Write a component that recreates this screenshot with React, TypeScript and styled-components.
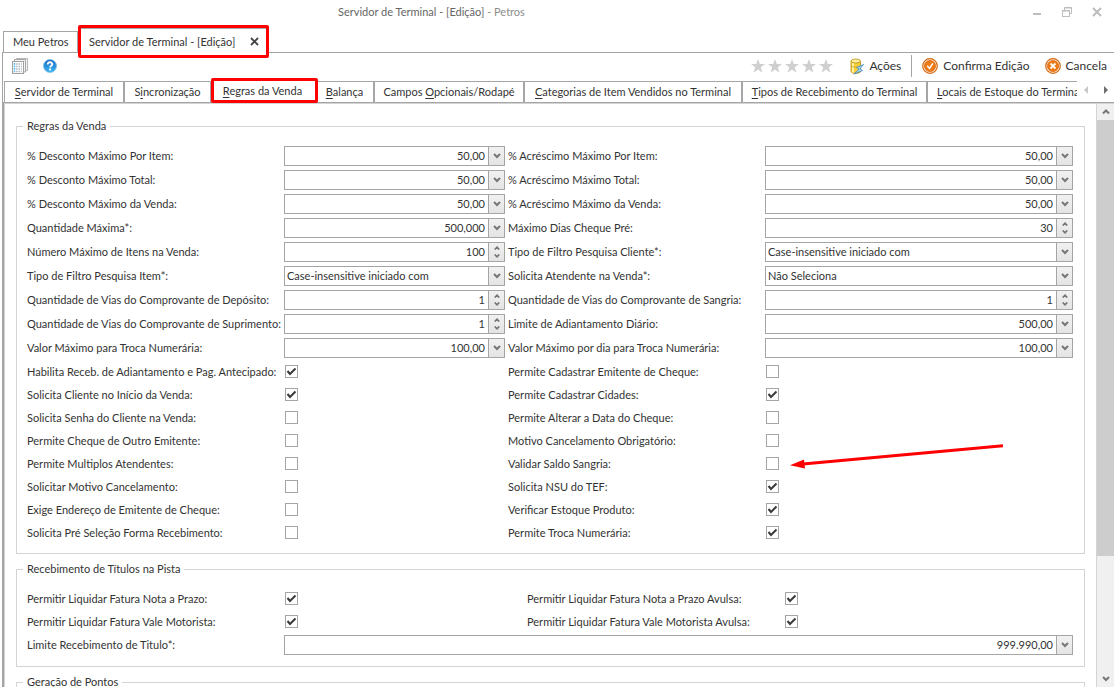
import React, { useId } from "react";
import styled, { createGlobalStyle, css } from "styled-components";

const line = "#a5a5a5";
const softLine = "#d4d4d4";
const ink = "#333333";
const red = "#fe0000";

const GlobalStyle = createGlobalStyle`
  *, *::before, *::after { box-sizing: border-box; }
  body {
    margin: 0;
    background: #ffffff;
    color: ${ink};
    font: 11px/14px Lato, Tahoma, sans-serif;
  }
  button, input, select { font: inherit; color: inherit; }
`;

const Window = styled.div`
  display: flex;
  flex-direction: column;
  height: 100vh;
  overflow: hidden;
`;

const TitleBar = styled.header`
  display: flex;
  align-items: center;
  height: 24px;
  padding: 0 11px 0 338px;
`;

const Title = styled.h1`
  flex: 1;
  margin: 0;
  font-size: 11px;
  font-weight: 400;
  color: #666666;
  span { color: #8c8c8c; }
`;

const WindowButtons = styled.div`
  display: flex;
  gap: 18px;
`;

const IconButton = styled.button`
  display: flex;
  align-items: center;
  justify-content: center;
  padding: 0;
  border: 0;
  background: none;
`;

const DocTabs = styled.nav`
  display: flex;
  align-items: flex-end;
  height: 28px;
  padding-left: 3px;
`;

const DocTab = styled.button<{ $active?: boolean }>`
  display: flex;
  align-items: center;
  height: 21px;
  padding: 0 9px;
  width: 75px;
  border: 1px solid ${line};
  border-bottom: 0;
  background: #ffffff;
  white-space: nowrap;
  ${(p) =>
    p.$active &&
    css`
      position: relative;
      z-index: 1;
      justify-content: space-between;
      width: 191px;
      height: 33px;
      margin-bottom: -6px;
      padding: 0 7px 0 8px;
      border: 3px solid ${red};
      border-radius: 2px;
      box-shadow: inset 0 1px ${line};
    `}
`;

const Frame = styled.main`
  display: flex;
  flex: 1;
  flex-direction: column;
  min-height: 0;
  margin-left: 2px;
  border: solid ${line};
  border-width: 1px 0 0 1px;
`;

const Toolbar = styled.div`
  display: flex;
  align-items: center;
  gap: 15px;
  height: 28px;
  padding: 0 7px 2px 9px;
`;

const Stars = styled.div`
  display: flex;
  gap: 3px;
  margin: 0 2px 0 auto;
`;

const Action = styled.button`
  display: flex;
  align-items: center;
  gap: 5px;
  padding: 0;
  border: 0;
  background: none;
  font-size: 12px;
  line-height: 16px;
`;

const Divider = styled.span`
  width: 1px;
  height: 22px;
  margin: 0 -5px;
  background: ${line};
`;

const TabRow = styled.div`
  display: flex;
  height: 22px;
  padding-left: 1px;
  border-bottom: 1px solid ${line};
`;

const TabList = styled.nav`
  display: flex;
  flex: 1;
  min-width: 0;
  height: 25px;
  margin-top: -3px;
  padding: 3px 0;
  overflow: hidden;
`;

const Tab = styled.button<{ $width: number; $active?: boolean }>`
  flex: none;
  width: ${(p) => p.$width}px;
  height: 22px;
  padding: 0;
  border: 1px solid ${line};
  background: #ffffff;
  white-space: nowrap;
  u { text-underline-offset: 2px; }
  &:last-child { padding-left: 9px; text-align: left; }
  ${(p) =>
    p.$active &&
    css`
      position: relative;
      z-index: 1;
      height: 25px;
      margin: -3px -3px 0 0;
      padding-right: 4px;
      border: 3px solid ${red};
      border-radius: 2px;
    `}
`;

const TabArrows = styled.div`
  display: flex;
  justify-content: space-between;
  width: 37px;
  padding: 0 6px 4px 7px;
`;

const Panel = styled.section`
  display: flex;
  flex: 1;
  min-height: 0;
  border: solid ${softLine};
  border-width: 1px 0 0 1px;
  box-shadow: -1px 0 ${line};
  margin-left: 1px;
`;

const Content = styled.form`
  display: flex;
  flex: 1;
  flex-direction: column;
  gap: 8px;
  min-width: 0;
  padding: 15px 11px 0;
  overflow: hidden;
`;

const Group = styled.fieldset`
  flex: none;
  min-width: 0;
  margin: 0;
  padding: 11px 11px 9px 10px;
  border: 1px solid ${softLine};
`;

const Legend = styled.legend`
  margin-left: -4px;
  padding: 0 4px;
  line-height: 14px;
`;

const FormGrid = styled.div<{ $even?: boolean }>`
  display: grid;
  grid-template-columns: ${(p) =>
    p.$even ? "257px 243fr 257px 289fr" : "257px 221fr 260px 308fr"};
  grid-auto-rows: min-content;
  align-items: center;
`;

const Label = styled.label<{ $inset?: boolean }>`
  padding-left: ${(p) => (p.$inset ? 3 : 0)}px;
  white-space: nowrap;
`;

const FieldCell = styled.div<{ $wide?: boolean }>`
  display: flex;
  align-items: center;
  height: 24px;
  ${(p) => p.$wide && "grid-column: 2 / -1;"}
`;

const Box = styled.div`
  display: flex;
  flex: 1;
  min-width: 0;
  height: 20px;
  border: 1px solid ${line};
`;

const NumberInput = styled.input`
  flex: 1;
  min-width: 0;
  padding: 0 3px;
  border: 0;
  outline: 0;
  background: none;
  text-align: right;
`;

const Select = styled.select`
  flex: 1;
  min-width: 0;
  padding: 0 2px;
  border: 0;
  outline: 0;
  background: none;
  appearance: none;
`;

const DropButton = styled.button`
  display: flex;
  flex-direction: column;
  align-items: center;
  justify-content: center;
  gap: 4px;
  width: 16px;
  padding: 0;
  border: 0;
  border-left: 1px solid ${line};
  background: linear-gradient(#f1f1f1, #e4e4e4);
`;

const CheckCell = styled.div`
  position: relative;
  display: flex;
  align-items: center;
  height: 23px;
  padding-left: 1px;
`;

const CheckInput = styled.input`
  width: 13px;
  height: 13px;
  margin: 0;
  border: 1px solid ${line};
  background: #ffffff;
  appearance: none;
  & + svg { visibility: hidden; }
  &:checked + svg { visibility: visible; }
`;

const Tick = styled.svg`
  margin-left: -13px;
  pointer-events: none;
`;

const Pointer = styled.svg`
  position: absolute;
  top: -8px;
  left: 24px;
  pointer-events: none;
`;

const ScrollBar = styled.div`
  display: flex;
  flex: none;
  flex-direction: column;
  width: 18px;
  border-left: 1px solid ${softLine};
  background: #f0f0f0;
`;

const ScrollButton = styled(IconButton)`
  height: 16px;
`;

const ScrollThumb = styled.div`
  flex: 436;
  background: #cdcdcd;
`;

const ScrollRest = styled.div`
  flex: 115;
`;

function Chevron({ up = false, small = false }: { up?: boolean; small?: boolean }) {
  const w = small ? 6 : 8;
  const d = small
    ? up ? "M.7 3.5 3 1.2 5.3 3.5" : "M.7.5 3 2.8 5.3.5"
    : up ? "M1 4.5 4 1.5 7 4.5" : "M1 1 4 4 7 1";
  return (
    <svg width={w} height={small ? 4 : 6} viewBox={`0 0 ${w} ${small ? 4 : 6}`} aria-hidden="true">
      <path d={d} fill="none" stroke="#767676" strokeWidth={small ? 1.7 : 2} />
    </svg>
  );
}

const StarIcon = () => (
  <svg width="14" height="14" viewBox="0 0 14 14" aria-hidden="true">
    <path d="M7 0 8.8 5H14L9.8 8.3 11.4 13.7 7 10.4 2.6 13.7 4.2 8.3 0 5H5.2Z" fill="#cfcfcf" />
  </svg>
);

const SheetsIcon = () => (
  <svg width="16" height="16" viewBox="0 0 16 16" aria-hidden="true">
    <path d="M4.5 2.5V.5H15.5V12.5H13.5" fill="#f4f4f4" stroke="#b5b5b5" />
    <path d="M2.5 3.5V1.5H13.5V14H12" fill="#f4f4f4" stroke="#a8a8a8" />
    <rect x=".5" y="3.5" width="11" height="12" fill="#fff" stroke="#a0a0a0" />
    <path d="M4 6H10M4 8.5H10M4 11H10M4 13.5H10" stroke="#b4bcc4" strokeWidth="1.4" strokeDasharray="1.6 .8" />
    <path d="M2.5 5V14.5" stroke="#62b8ee" strokeWidth="1.6" strokeDasharray="1.7 .8" />
  </svg>
);

const HelpIcon = () => (
  <svg width="14" height="14" viewBox="0 0 14 14" aria-hidden="true">
    <defs>
      <linearGradient id="help" x1="0" y1="0" x2="0" y2="1">
        <stop offset="0" stopColor="#1766bd" />
        <stop offset="1" stopColor="#3bb8f5" />
      </linearGradient>
    </defs>
    <circle cx="7" cy="7" r="6.5" fill="url(#help)" stroke="#7dbdea" strokeWidth=".8" />
    <path d="M4.7 5.4C4.7 2.5 9.6 2.7 9.3 5.4 9.1 6.9 7.1 6.7 7.1 8.5" fill="none" stroke="#fff" strokeWidth="1.9" />
    <rect x="6.1" y="9.5" width="2" height="1.9" fill="#fff" />
  </svg>
);

const DatabaseIcon = () => (
  <svg width="14" height="17" viewBox="0 0 14 17" aria-hidden="true">
    <path d="M1 3V13.5C1 16 10.5 16 10.5 13.5V3Z" fill="#f6cf38" stroke="#b98a10" strokeWidth=".8" />
    <path d="M3 5V14.5" stroke="#fff2a3" strokeWidth="2" />
    <path d="M1 8C2 9.5 9.5 9.5 10.5 8" fill="none" stroke="#c99a1c" strokeWidth=".8" />
    <ellipse cx="5.75" cy="3" rx="4.75" ry="2" fill="#fff0a0" stroke="#b98a10" strokeWidth=".8" />
    <path d="M13.5 6.5 6.5 9.5 9.2 11.2 3.8 16 12.5 12.6 10 10.7Z" fill="#a5dcfb" stroke="#4187b8" strokeWidth=".8" />
  </svg>
);

const RoundIcon = ({ kind }: { kind: "ok" | "cancel" }) => (
  <svg width="16" height="16" viewBox="0 0 16 16" aria-hidden="true">
    <circle cx="8" cy="8" r="7.3" fill="#fdf0e2" stroke="#d5670f" strokeWidth="1.2" />
    <circle cx="8" cy="8" r="5.5" fill="#ee7a16" stroke="#d9640c" strokeWidth=".8" />
    {kind === "ok" ? (
      <path d="M5.2 7.8 7.5 10.4 10.8 5.4" fill="none" stroke="#fff" strokeWidth="1.5" />
    ) : (
      <path d="M5.5 5.5 10.5 10.5M10.5 5.5 5.5 10.5" stroke="#fff" strokeWidth="1.8" />
    )}
  </svg>
);

type Kind = "drop" | "spin" | "select";
type FieldSpec = [label: string, kind: Kind, value: string];

function Field({ spec, inset, wide }: { spec: FieldSpec; inset?: boolean; wide?: boolean }) {
  const id = useId();
  const [label, kind, value] = spec;
  return (
    <>
      <Label htmlFor={id} $inset={inset}>{label}</Label>
      <FieldCell $wide={wide}>
        <Box>
          {kind === "select" ? (
            <Select id={id}><option>{value}</option></Select>
          ) : (
            <NumberInput id={id} defaultValue={value} />
          )}
          <DropButton type="button" tabIndex={-1} aria-label="Abrir">
            {kind === "spin" ? (<><Chevron small up /><Chevron small /></>) : <Chevron />}
          </DropButton>
        </Box>
      </FieldCell>
    </>
  );
}

type CheckSpec = [label: string, checked: boolean];

function Check({ spec, inset, pointed }: { spec: CheckSpec; inset?: boolean; pointed?: boolean }) {
  const id = useId();
  return (
    <>
      <Label htmlFor={id} $inset={inset}>{spec[0]}</Label>
      <CheckCell>
        <CheckInput id={id} type="checkbox" defaultChecked={spec[1]} />
        <Tick width="13" height="13" viewBox="0 0 13 13" aria-hidden="true">
          <path d="M2.5 6 5 9 10.5 3.5" fill="none" stroke="#3a3a3a" strokeWidth="2" />
        </Tick>
        {pointed && (
          <Pointer width="216" height="28" viewBox="0 0 216 28" aria-hidden="true">
            <path d="M14 20 214 1.8" stroke={red} strokeWidth="3" />
            <path d="M1 21.2 15 15.5 16 24.5Z" fill={red} />
          </Pointer>
        )}
      </CheckCell>
    </>
  );
}

const fields: [FieldSpec, FieldSpec][] = [
  [["% Desconto Máximo Por Item:", "drop", "50,00"], ["% Acréscimo Máximo Por Item:", "drop", "50,00"]],
  [["% Desconto Máximo Total:", "drop", "50,00"], ["% Acréscimo Máximo Total:", "drop", "50,00"]],
  [["% Desconto Máximo da Venda:", "drop", "50,00"], ["% Acréscimo Máximo da Venda:", "drop", "50,00"]],
  [["Quantidade Máxima*:", "drop", "500,000"], ["Máximo Dias Cheque Pré:", "spin", "30"]],
  [["Número Máximo de Itens na Venda:", "spin", "100"], ["Tipo de Filtro Pesquisa Cliente*:", "select", "Case-insensitive iniciado com"]],
  [["Tipo de Filtro Pesquisa Item*:", "select", "Case-insensitive iniciado com"], ["Solicita Atendente na Venda*:", "select", "Não Seleciona"]],
  [["Quantidade de Vias do Comprovante de Depósito:", "spin", "1"], ["Quantidade de Vias do Comprovante de Sangria:", "spin", "1"]],
  [["Quantidade de Vias do Comprovante de Suprimento:", "spin", "1"], ["Limite de Adiantamento Diário:", "drop", "500,00"]],
  [["Valor Máximo para Troca Numerária:", "drop", "100,00"], ["Valor Máximo por dia para Troca Numerária:", "drop", "100,00"]],
];

const checks: [CheckSpec, CheckSpec][] = [
  [["Habilita Receb. de Adiantamento e Pag. Antecipado:", true], ["Permite Cadastrar Emitente de Cheque:", false]],
  [["Solicita Cliente no Início da Venda:", true], ["Permite Cadastrar Cidades:", true]],
  [["Solicita Senha do Cliente na Venda:", false], ["Permite Alterar a Data do Cheque:", false]],
  [["Permite Cheque de Outro Emitente:", false], ["Motivo Cancelamento Obrigatório:", false]],
  [["Permite Multiplos Atendentes:", false], ["Validar Saldo Sangria:", false]],
  [["Solicitar Motivo Cancelamento:", false], ["Solicita NSU do TEF:", true]],
  [["Exige Endereço de Emitente de Cheque:", false], ["Verificar Estoque Produto:", true]],
  [["Solicita Pré Seleção Forma Recebimento:", false], ["Permite Troca Numerária:", true]],
];

const titleChecks: CheckSpec[] = [
  ["Permitir Liquidar Fatura Nota a Prazo:", true],
  ["Permitir Liquidar Fatura Nota a Prazo Avulsa:", true],
  ["Permitir Liquidar Fatura Vale Motorista:", true],
  ["Permitir Liquidar Fatura Vale Motorista Avulsa:", true],
];

export default function App() {
  return (
    <Window>
      <GlobalStyle />
      <TitleBar>
        <Title>Servidor de Terminal - [Edição] <span>- Petros</span></Title>
        <WindowButtons>
          <IconButton aria-label="Minimizar">
            <svg width="12" height="12" viewBox="0 0 12 12"><path d="M2 8H10" stroke="#bdbdbd" strokeWidth="2" /></svg>
          </IconButton>
          <IconButton aria-label="Restaurar">
            <svg width="12" height="12" viewBox="0 0 12 12" fill="none" stroke="#bdbdbd">
              <path d="M3.5 4V1.5H10.5V7.5H8.5M3.5 2H10.5M1.5 5H8.5" />
              <rect x="1.5" y="4.5" width="7" height="6" />
            </svg>
          </IconButton>
          <IconButton aria-label="Fechar">
            <svg width="12" height="12" viewBox="0 0 12 12"><path d="M2 2 10 10M10 2 2 10" stroke="#bdbdbd" strokeWidth="2" /></svg>
          </IconButton>
        </WindowButtons>
      </TitleBar>
      <DocTabs>
        <DocTab>Meu Petros</DocTab>
        <DocTab $active>
          Servidor de Terminal - [Edição]
          <svg width="9" height="9" viewBox="0 0 9 9" aria-hidden="true">
            <path d="M1 1 8 8M8 1 1 8" stroke="#444444" strokeWidth="1.8" />
          </svg>
        </DocTab>
      </DocTabs>
      <Frame>
        <Toolbar>
          <IconButton aria-label="Registros"><SheetsIcon /></IconButton>
          <IconButton aria-label="Ajuda"><HelpIcon /></IconButton>
          <Stars>{[1, 2, 3, 4, 5].map((n) => <StarIcon key={n} />)}</Stars>
          <Action><DatabaseIcon />Ações</Action>
          <Divider />
          <Action><RoundIcon kind="ok" />Confirma Edição</Action>
          <Action><RoundIcon kind="cancel" />Cancela</Action>
        </Toolbar>
        <TabRow>
          <TabList>
            <Tab $width={120}><u>S</u>ervidor de Terminal</Tab>
            <Tab $width={87}>S<u>i</u>ncronização</Tab>
            <Tab $width={107} $active><u>R</u>egras da Venda</Tab>
            <Tab $width={59}><u>B</u>alança</Tab>
            <Tab $width={150}>Campos <u>O</u>pcionais/Rodapé</Tab>
            <Tab $width={218}><u>C</u>ategorias de Item Vendidos no Terminal</Tab>
            <Tab $width={185}><u>T</u>ipos de Recebimento do Terminal</Tab>
            <Tab $width={170}><u>L</u>ocais de Estoque do Terminal</Tab>
          </TabList>
          <TabArrows>
            <IconButton aria-label="Anterior">
              <svg width="5" height="8" viewBox="0 0 5 8"><path d="M4 0V8L0 4Z" fill="#c8c8c8" /></svg>
            </IconButton>
            <IconButton aria-label="Próximo">
              <svg width="5" height="8" viewBox="0 0 5 8"><path d="M1 0V8L5 4Z" fill="#6e6e6e" /></svg>
            </IconButton>
          </TabArrows>
        </TabRow>
        <Panel>
          <Content>
            <Group>
              <Legend>Regras da Venda</Legend>
              <FormGrid>
                {fields.map(([a, b]) => (
                  <React.Fragment key={a[0]}><Field spec={a} /><Field spec={b} inset /></React.Fragment>
                ))}
                {checks.map(([a, b]) => (
                  <React.Fragment key={a[0]}>
                    <Check spec={a} />
                    <Check spec={b} inset pointed={b[0].startsWith("Validar")} />
                  </React.Fragment>
                ))}
              </FormGrid>
            </Group>
            <Group>
              <Legend>Recebimento de Títulos na Pista</Legend>
              <FormGrid $even>
                {titleChecks.map((c) => <Check key={c[0]} spec={c} />)}
                <Field spec={["Limite Recebimento de Titulo*:", "drop", "999.990,00"]} wide />
              </FormGrid>
            </Group>
            <Group>
              <Legend>Geração de Pontos</Legend>
            </Group>
          </Content>
          <ScrollBar>
            <ScrollButton type="button" aria-label="Rolar para cima"><Chevron up /></ScrollButton>
            <ScrollThumb />
            <ScrollRest />
            <ScrollButton type="button" aria-label="Rolar para baixo"><Chevron /></ScrollButton>
          </ScrollBar>
        </Panel>
      </Frame>
    </Window>
  );
}
